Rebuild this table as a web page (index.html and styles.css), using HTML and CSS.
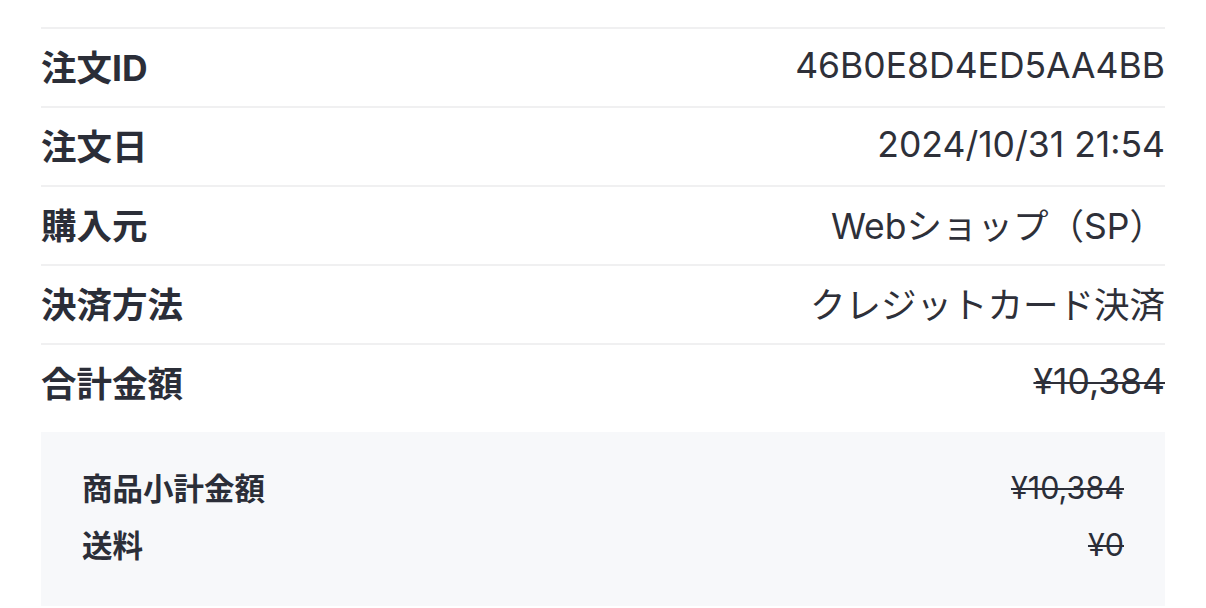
FILE: index.html
```html
<!DOCTYPE html>
<html lang="ja">
<head>
<meta charset="utf-8">
<title>注文詳細</title>
<link rel="stylesheet" href="styles.css">
</head>
<body>
<main class="page">
  <dl class="info">
    <div class="row">
      <dt class="label">注文ID</dt>
      <dd class="value">46B0E8D4ED5AA4BB</dd>
    </div>
    <div class="row">
      <dt class="label">注文日</dt>
      <dd class="value">2024/10/31 21:54</dd>
    </div>
    <div class="row">
      <dt class="label">購入元</dt>
      <dd class="value">Webショップ（SP）</dd>
    </div>
    <div class="row">
      <dt class="label">決済方法</dt>
      <dd class="value">クレジットカード決済</dd>
    </div>
    <div class="row row-total">
      <dt class="label">合計金額</dt>
      <dd class="value price">¥10,384</dd>
    </div>
  </dl>
  <dl class="breakdown">
    <div class="sub-row">
      <dt class="sub-label">商品小計金額</dt>
      <dd class="sub-value price">¥10,384</dd>
    </div>
    <div class="sub-row">
      <dt class="sub-label">送料</dt>
      <dd class="sub-value price">¥0</dd>
    </div>
  </dl>
</main>
</body>
</html>
```
FILE: styles.css
```css
* { box-sizing: border-box; }
html, body { margin: 0; padding: 0; background: #ffffff; }
body {
  font-family: Inter, "Noto Sans CJK JP", sans-serif;
  color: #2b2e38;
}
.page {
  padding: 27px 41px 0 41px;
}
.info {
  margin: 0;
}
.row {
  display: flex;
  align-items: center;
  justify-content: space-between;
  height: 79px;
  padding-bottom: 5px;
  border-top: 2px solid #f0f0f1;
}
.label {
  margin: 0;
  font-size: 35.5px;
  font-weight: 700;
}
.value {
  margin: 0;
  font-size: 35.5px;
  font-weight: 400;
  color: #2e3039;
}
.price {
  text-decoration: line-through;
  text-decoration-thickness: 2px;
}
.breakdown {
  margin: 10px 0 0 0;
  background: #f7f8fa;
  padding: 33px 41px 40px 41px;
  display: flex;
  flex-direction: column;
  gap: 13px;
}
.sub-row {
  display: flex;
  justify-content: space-between;
  align-items: center;
  height: 44px;
}
.sub-label {
  margin: 0;
  font-size: 30.5px;
  font-weight: 700;
}
.sub-value {
  margin: 0;
  font-size: 30.5px;
  font-weight: 400;
}
```
